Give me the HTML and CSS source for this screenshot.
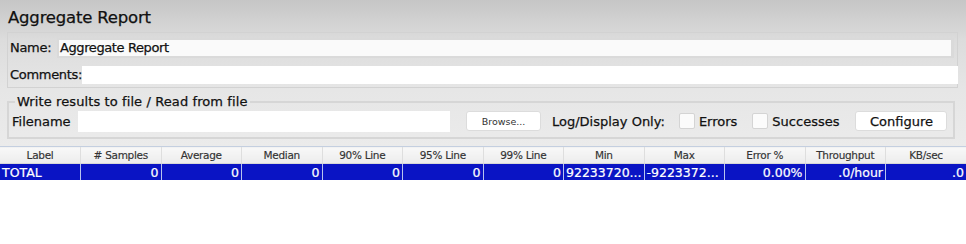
FILE: index.html
```html
<!DOCTYPE html>
<html lang="en">
<head>
  <meta charset="UTF-8" />
  <title>Aggregate Report</title>
  <link rel="stylesheet" href="styles.css">
</head>
<body>
  <div class="top">
    <h1 class="title">Aggregate Report</h1>
    <div class="name-panel">
      <div class="row">
        <label class="name-label">Name:</label>
        <div class="field name-field">Aggregate Report</div>
      </div>
      <div class="row">
        <label class="comments-label">Comments:</label>
        <div class="field comments-field"></div>
      </div>
    </div>
    <fieldset class="file-box">
      <legend>Write results to file / Read from file</legend>
      <div class="file-row">
        <span class="file-label">Filename</span>
        <div class="field file-field"></div>
        <button class="browse">Browse...</button>
        <span class="log-label">Log/Display Only:</span>
        <span class="check"></span><span class="check-label">Errors</span>
        <span class="check"></span><span class="check-label">Successes</span>
        <button class="configure">Configure</button>
      </div>
    </fieldset>
  </div>

  <table class="report">
    <thead>
      <tr>
        <th>Label</th><th># Samples</th><th>Average</th><th>Median</th>
        <th>90% Line</th><th>95% Line</th><th>99% Line</th><th>Min</th>
        <th>Max</th><th>Error %</th><th>Throughput</th><th>KB/sec</th>
      </tr>
    </thead>
    <tbody>
      <tr class="selected">
        <td class="left">TOTAL</td><td>0</td><td>0</td><td>0</td>
        <td>0</td><td>0</td><td>0</td><td class="left">92233720...</td>
        <td class="left">-9223372...</td><td>0.00%</td><td>.0/hour</td><td>.0</td>
      </tr>
    </tbody>
  </table>
</body>
</html>
```

FILE: styles.css
```css
body {
  margin: 0;
  font-family: 'DejaVu Sans', 'Liberation Sans', sans-serif;
  color: #111;
  background: #fff;
}

.top {
  background: linear-gradient(#c6c6c6 0px, #dcdcdc 40px, #e6e6e6 90px, #ebebeb 146px);
  padding: 8px 8px 0 7px;
  height: 138px;
  -webkit-text-stroke: 0.25px;
}

.title {
  margin: 0 0 0 1px;
  font-size: 16.5px;
  font-weight: normal;
  line-height: 20px;
  letter-spacing: -0.2px;
}

.name-panel {
  margin-top: 4px;
  border: 1px solid #d2d2d2;
  padding: 4px 0 2px 2px;
}

.row {
  display: flex;
  align-items: center;
  height: 21px;
  margin-bottom: 6px;
}

.row:last-child {
  margin-bottom: 0;
}

.field {
  background: #fff;
  height: 18px;
  box-sizing: border-box;
  font-size: 13px;
  line-height: 18px;
  padding-left: 1px;
}

.name-label, .comments-label {
  font-size: 13px;
  letter-spacing: -0.3px;
}

.name-label {
  width: 47px;
}

.name-field {
  flex: 1;
  border: 2px solid #dadada;
  border-right-width: 3px;
  height: 20px;
  line-height: 16px;
  background: #fafafa;
  margin-right: 3px;
  letter-spacing: -0.4px;
}

.comments-field {
  flex: 1;
  margin-right: -1px;
}

.file-box {
  margin: 6px 3px 0 0;
  border: 2px solid #d6d6d6;
  padding: 1px 0 5px 3px;
}

.file-box legend {
  font-size: 13px;
  padding: 0 2px;
  margin-left: 3px;
  letter-spacing: 0.1px;
}

.file-row {
  display: flex;
  align-items: center;
  height: 22px;
  font-size: 13px;
}

.file-label {
  width: 66px;
}

.file-field {
  width: 372px;
  height: 21px;
  margin-right: 16px;
}

.browse {
  width: 75px;
  height: 20px;
  background: #fff;
  border: 1px solid #dcdcdc;
  border-radius: 3px;
  font-family: inherit;
  font-size: 9.5px;
  color: #333;
  padding: 0;
  margin-right: 11px;
  -webkit-text-stroke: 0;
}

.log-label {
  margin-right: 14px;
}

.check {
  width: 14px;
  height: 14px;
  background: #fbfbfb;
  border: 1px solid #d4d4d4;
  border-radius: 2px;
  margin-right: 4px;
}

.check-label {
  margin-right: 15px;
}

.check-label + .configure {
  margin-left: 1px;
}

.configure {
  width: 92px;
  height: 20px;
  background: #fff;
  border: 1px solid #dcdcdc;
  border-radius: 3px;
  font-family: inherit;
  font-size: 13px;
  color: #111;
  padding: 0;
  -webkit-text-stroke: 0.25px;
}

.report {
  width: 966px;
  table-layout: fixed;
  border-collapse: collapse;
  font-size: 10.5px;
}

.report th {
  height: 16px;
  padding: 0;
  font-weight: normal;
  color: #333;
  background: linear-gradient(#f8f8f8, #ececec);
  border-top: 1px solid #c4cfe0;
  border-bottom: 1px solid #d8d8d8;
  border-left: 1px solid #dedede;
  letter-spacing: -0.3px;
  -webkit-text-stroke: 0.15px;
}

.report th:first-child {
  border-left: none;
}

.report td {
  height: 16px;
  padding: 0 2px;
  text-align: right;
  color: #fff;
  font-size: 12.5px;
  border-left: 1px solid #b8c4ee;
  white-space: nowrap;
  overflow: hidden;
  -webkit-text-stroke: 0.2px;
}

.report td:first-child {
  border-left: none;
}

.report td.left {
  text-align: left;
}

.selected {
  background: #0a14c4;
}
```
